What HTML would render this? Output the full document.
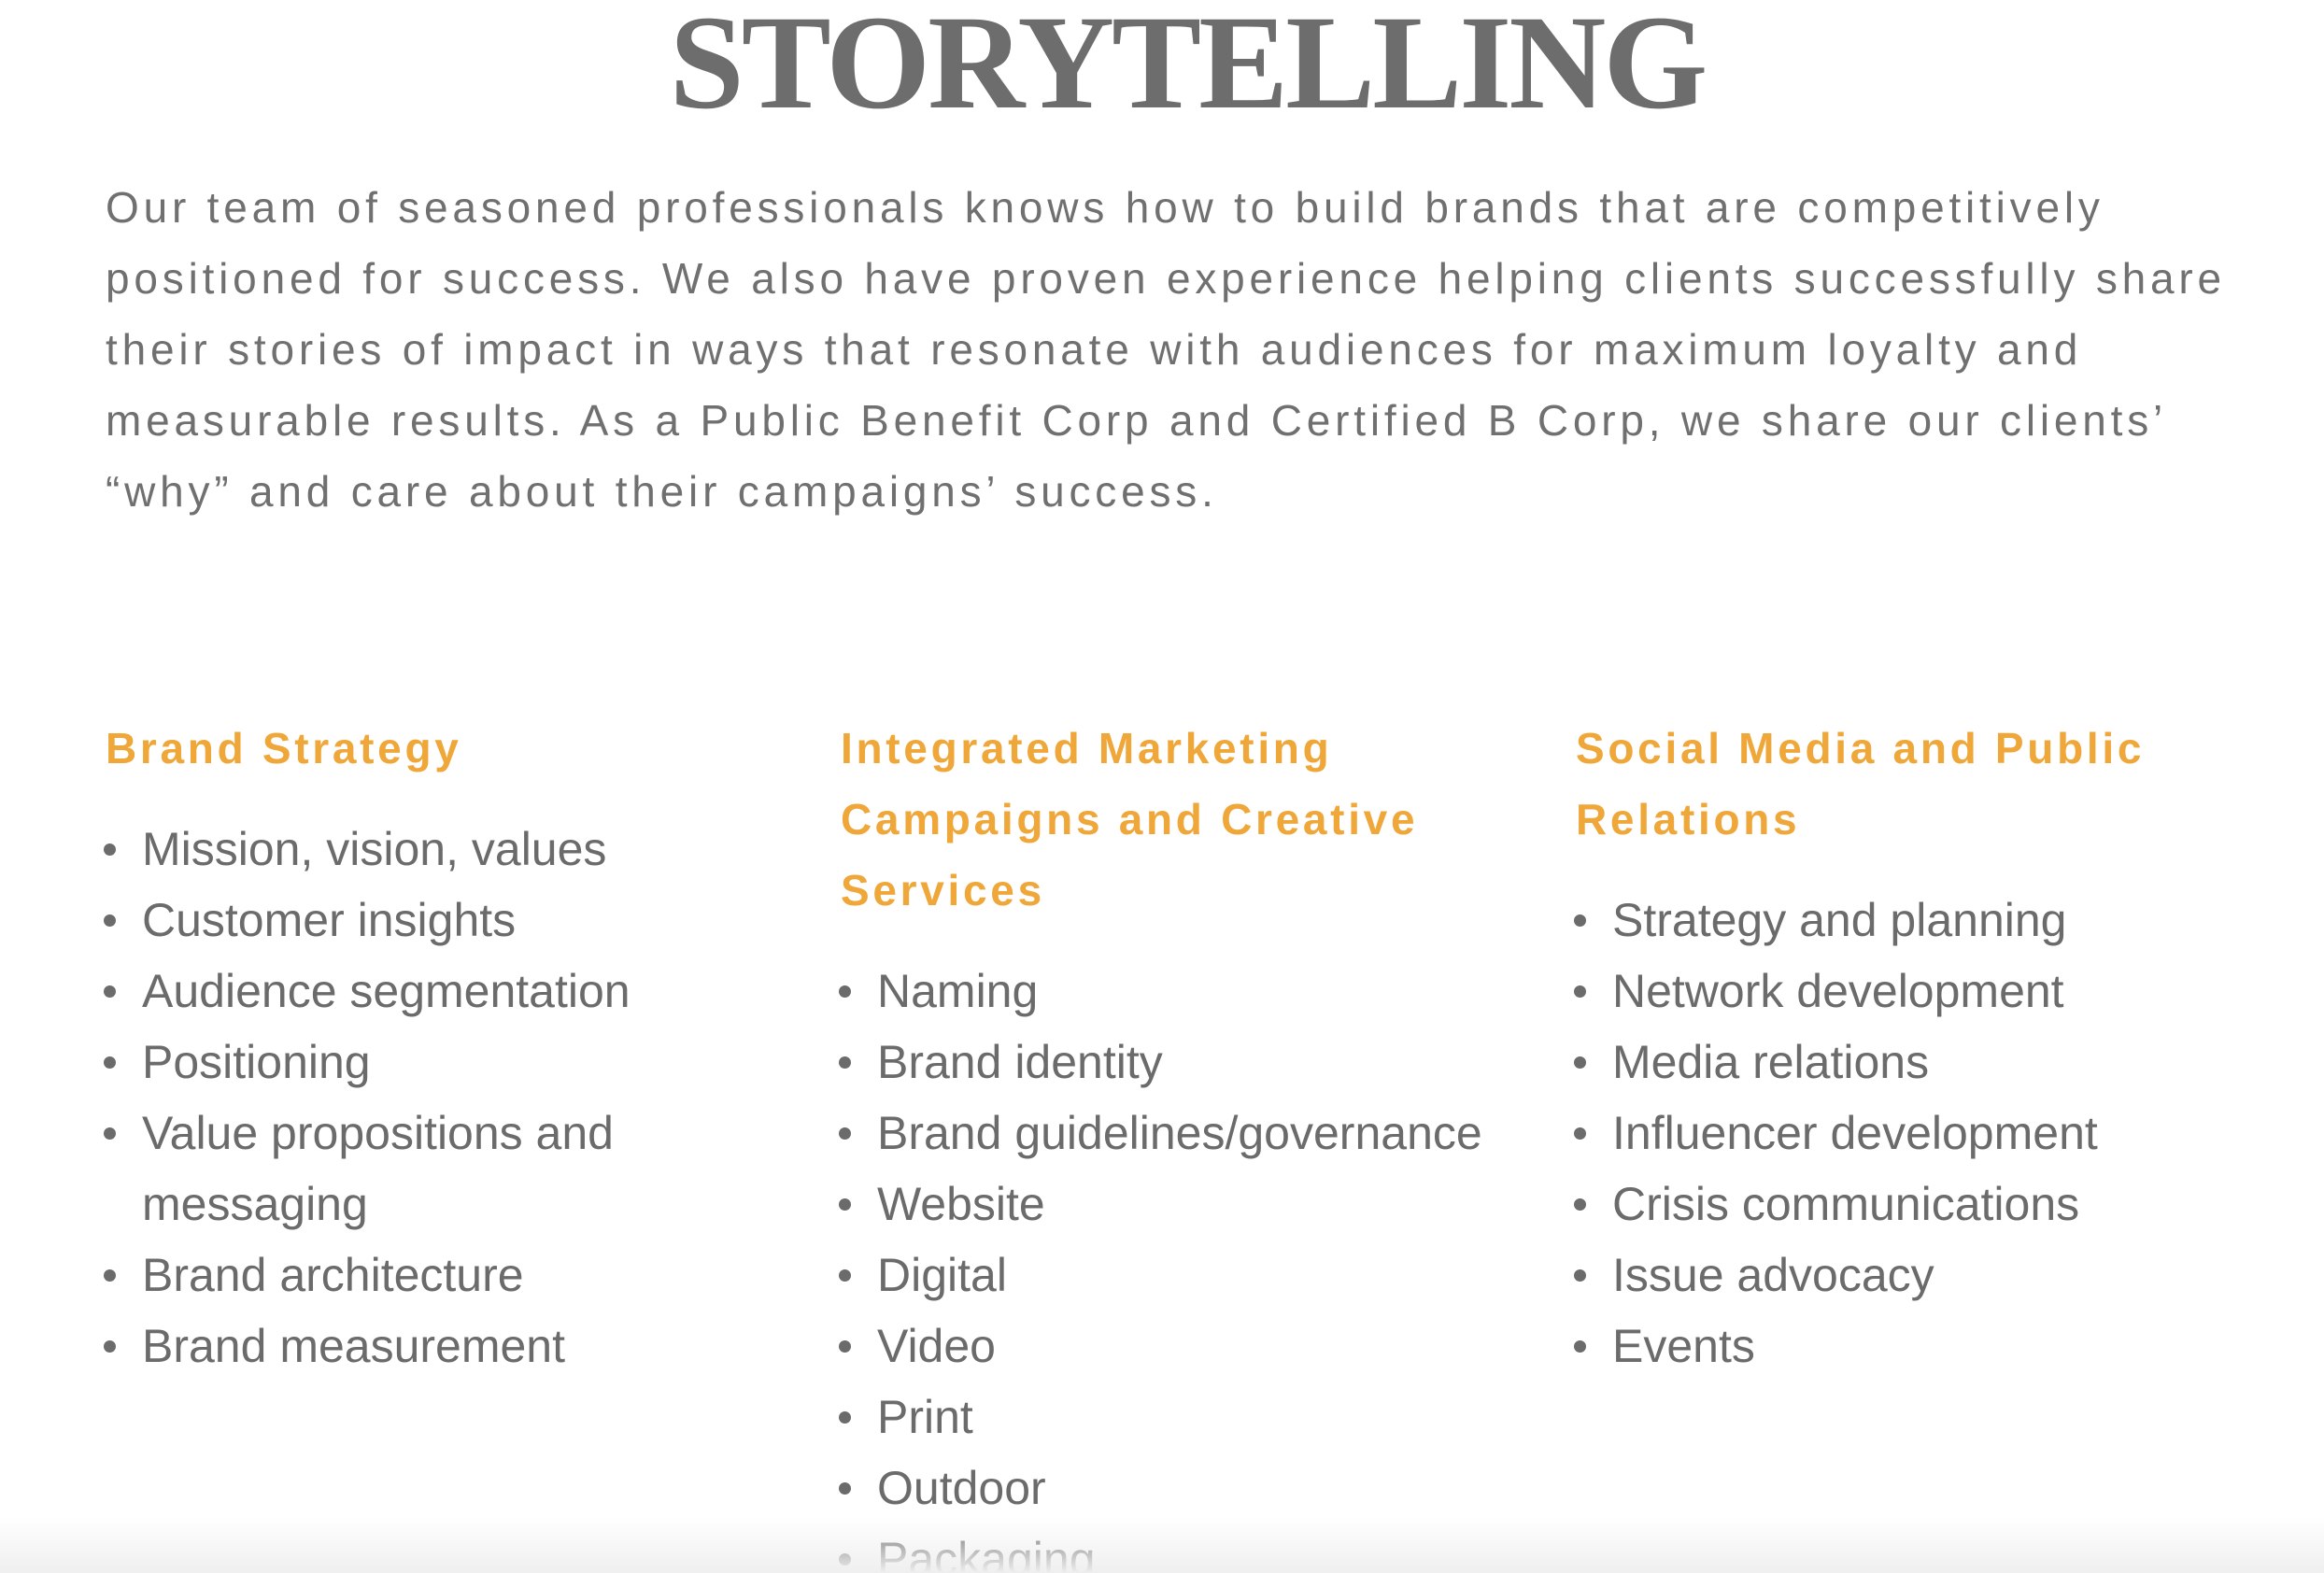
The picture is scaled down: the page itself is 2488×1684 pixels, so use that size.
<!DOCTYPE html>
<html><head><meta charset="utf-8"><style>
html,body{margin:0;padding:0;width:2488px;height:1684px;overflow:hidden;background:#fff}
body{position:relative;font-family:"Liberation Sans",sans-serif;color:#6e6e6e}
h1{position:absolute;left:27px;width:2488px;top:-14px;margin:0;text-align:center;font-family:"Liberation Serif",serif;font-weight:bold;font-size:144px;line-height:164px;color:#6d6d6d;letter-spacing:-3px;white-space:nowrap}
.p{position:absolute;left:113px;top:184px;font-size:46px;line-height:76px;letter-spacing:4.8px;white-space:nowrap;color:#707070}
.col{position:absolute;top:763px;width:787px}
.col h2{margin:0;font-size:46px;line-height:76px;letter-spacing:3.7px;color:#f0a73a;font-weight:bold}
.col ul{margin:32px 0 0 0;padding:0 0 0 39px;font-size:50px;line-height:76px;color:#6b6b6b;list-style:none}
.col li{position:relative}
.col li::before{content:"";position:absolute;left:-41px;top:32px;width:13px;height:13px;border-radius:50%;background:#6b6b6b}
.fade{position:absolute;left:0;right:0;bottom:0;height:60px;background:linear-gradient(rgba(240,240,240,0),#efefef)}
</style></head><body>
<h1>STORYTELLING</h1>
<div class="p">Our team of seasoned professionals knows how to build brands that are competitively<br>positioned for success. We also have proven experience helping clients successfully share<br>their stories of impact in ways that resonate with audiences for maximum loyalty and<br>measurable results. As a Public Benefit Corp and Certified B Corp, we share our clients’<br>“why” and care about their campaigns’ success.</div>
<div class="col" style="left:113px"><h2>Brand Strategy</h2><ul>
<li>Mission, vision, values</li><li>Customer insights</li><li>Audience segmentation</li><li>Positioning</li><li>Value propositions and<br>messaging</li><li>Brand architecture</li><li>Brand measurement</li></ul></div>
<div class="col" style="left:900px"><h2>Integrated Marketing<br>Campaigns and Creative<br>Services</h2><ul>
<li>Naming</li><li>Brand identity</li><li>Brand guidelines/governance</li><li>Website</li><li>Digital</li><li>Video</li><li>Print</li><li>Outdoor</li><li>Packaging</li></ul></div>
<div class="col" style="left:1687px"><h2>Social Media and Public<br>Relations</h2><ul>
<li>Strategy and planning</li><li>Network development</li><li>Media relations</li><li>Influencer development</li><li>Crisis communications</li><li>Issue advocacy</li><li>Events</li></ul></div>
<div class="fade"></div>
</body></html>
